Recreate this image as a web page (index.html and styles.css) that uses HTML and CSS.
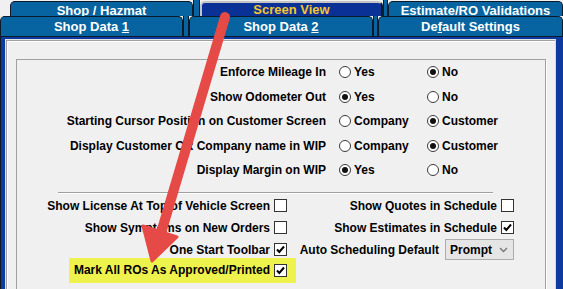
FILE: index.html
```html
<!DOCTYPE html>
<html lang="en">
<head>
  <meta charset="UTF-8">
  <title>Screen View Settings</title>
  <link rel="stylesheet" href="styles.css">
</head>
<body>
  <div class="window">
    <div class="tabrow back">
      <div class="tab-spacer"></div>
      <div class="tab w-hazmat">Shop / <u>H</u>azmat</div>
      <div class="tab-gap g7"></div>
      <div class="tab active w-screen">Screen View</div>
      <div class="tab-gap g5"></div>
      <div class="tab w-valid">Estimate/RO <u>V</u>alidations</div>
    </div>
    <div class="tabrow front">
      <div class="tab w-data1">Shop Data <u>1</u></div>
      <div class="tab-gap g6"></div>
      <div class="tab w-data2">Shop Data <u>2</u></div>
      <div class="tab-gap g5"></div>
      <div class="tab w-default">De<u>f</u>ault Settings</div>
    </div>

    <div class="frame">
      <div class="panel">
        <div class="group">
          <div class="options">
            <div class="label">Enforce Mileage In</div>
            <div class="opt"><span class="radio"></span>Yes</div>
            <div class="opt"><span class="radio on"></span>No</div>

            <div class="label">Show Odometer Out</div>
            <div class="opt"><span class="radio on"></span>Yes</div>
            <div class="opt"><span class="radio"></span>No</div>

            <div class="label">Starting Cursor Position on Customer Screen</div>
            <div class="opt"><span class="radio"></span>Company</div>
            <div class="opt"><span class="radio on"></span>Customer</div>

            <div class="label">Display Customer OR Company name in WIP</div>
            <div class="opt"><span class="radio"></span>Company</div>
            <div class="opt"><span class="radio on"></span>Customer</div>

            <div class="label">Display Margin on WIP</div>
            <div class="opt"><span class="radio on"></span>Yes</div>
            <div class="opt"><span class="radio"></span>No</div>
          </div>

          <div class="sep"></div>

          <div class="checks">
            <div class="check">Show License At Top of Vehicle Screen <span class="box"></span></div>
            <div class="check">Show Quotes in Schedule <span class="box"></span></div>

            <div class="check">Show Symptoms on New Orders <span class="box"></span></div>
            <div class="check">Show Estimates in Schedule <span class="box on"></span></div>

            <div class="check">One Start Toolbar <span class="box on"></span></div>
            <div class="check">Auto Scheduling Default
              <div class="select">Prompt
                <svg width="9" height="6" viewBox="0 0 9 6"><path d="M1 1 L4.5 4.5 L8 1" fill="none" stroke="#777" stroke-width="1.4"/></svg>
              </div>
            </div>

            <div class="check highlight">Mark All ROs As Approved/Printed <span class="box on"></span></div>
            <div></div>
          </div>
        </div>
      </div>
    </div>

    <!-- annotation arrow drawn over the form -->
    <svg class="arrow" width="563" height="289" viewBox="0 0 563 289">
      <line x1="225" y1="17" x2="161" y2="233" stroke="#e64a47" stroke-width="10" stroke-linecap="round"/>
      <polygon points="152,261 143,226 177,237" fill="#e64a47" stroke="#e64a47" stroke-width="3" stroke-linejoin="round"/>
    </svg>
  </div>
</body>
</html>
```

FILE: styles.css
```css
:root {
  --tab-blue: #0764a0;
  --tab-edge: #0c1a2a;
  --tab-active: #0a3196;
  --frame-blue: #0d3a9f;
  --face: #f0f0f0;
  --shadow: #a0a0a0;
}

body {
  margin: 0;
  background-color: var(--face);
  font-family: "Liberation Sans", Arial, sans-serif;
  font-size: 12px;
  font-weight: bold;
  color: #000;
  overflow: hidden;
}

.window {
  position: relative;
  width: 563px;
  height: 289px;
  overflow: hidden;
}

/* tabs */
.tabrow {
  display: flex;
}

.tabrow.back {
  height: 16px;
}

.tabrow.front {
  height: 20px;
}

.tab-spacer {
  width: 10px;
}

.tab {
  box-sizing: border-box;
  background-color: var(--tab-blue);
  border: 1px solid var(--tab-edge);
  border-bottom: none;
  border-radius: 5px 5px 0 0;
  color: #fff;
  font-size: 13px;
  text-align: center;
}

.back .tab {
  line-height: 17px;
  margin-top: 1px;
}

.front .tab {
  line-height: 19px;
}

.tab.active {
  background-color: var(--tab-active);
  border: 2px solid #c4c4c4;
  border-right-color: var(--tab-edge);
  border-bottom: none;
  color: #f4c631;
  line-height: 14px;
}

.tab-gap {
  box-sizing: border-box;
  background-color: var(--tab-blue);
  border-left: 1px solid var(--tab-edge);
  border-right: 1px solid var(--tab-edge);
}

.g5 { width: 5px; }
.g6 { width: 6px; }
.g7 { width: 7px; }

.w-hazmat { width: 183px; }
.w-screen { width: 183px; }
.w-valid { width: 175px; }
.w-data1 { width: 183px; }
.w-data2 { width: 184px; }
.w-default { width: 185px; }

/* frame and panel */
.frame {
  background-color: var(--frame-blue);
  border-top: 1px solid var(--tab-edge);
  border-left: 1px solid var(--tab-edge);
  padding: 2px 7px 0 4px;
  height: 260px;
}

.panel {
  height: 100%;
  background-color: var(--face);
  border: 1px solid #e4e4e4;
  border-right-color: #d8d8d8;
  box-shadow: inset 1px 1px 0 var(--shadow), inset 2px 2px 0 #fff;
  padding: 19px 9px 0 10px;
}

.group {
  height: 240px;
  border: 1px solid var(--shadow);
  border-bottom: none;
  box-shadow: 1px 1px 0 #fff;
}

/* radio rows */
.options {
  display: grid;
  grid-template-columns: 313px 88px auto;
  grid-auto-rows: 24.5px;
  align-items: center;
}

.label {
  text-align: right;
  padding-right: 4px;
}

.opt {
  display: flex;
  align-items: center;
}

.radio {
  box-sizing: border-box;
  position: relative;
  width: 12px;
  height: 12px;
  margin: 0 3px 0 9px;
  border: 1px solid #3a3a3a;
  border-radius: 50%;
  background-color: #fff;
}

.radio.on::after {
  content: "";
  position: absolute;
  left: 2px;
  top: 2px;
  width: 6px;
  height: 6px;
  border-radius: 50%;
  background-color: #111;
}

.sep {
  width: 435px;
  margin: 9px 0 1px 41px;
  border-top: 1px solid var(--shadow);
  border-bottom: 1px solid #fff;
}

/* checkbox rows */
.checks {
  display: grid;
  grid-template-columns: 270px 227px;
  grid-auto-rows: 22px;
  align-items: center;
}

.check {
  justify-self: end;
  display: flex;
  align-items: center;
  gap: 4px;
  white-space: nowrap;
}

.box {
  box-sizing: border-box;
  width: 13px;
  height: 13px;
  border: 1px solid #333;
  background-color: #fff;
}

.box.on {
  background: #fff url("data:image/svg+xml,%3Csvg xmlns='http://www.w3.org/2000/svg' width='11' height='11'%3E%3Cpath d='M2 5.5 L4.3 8 L9 2.5' fill='none' stroke='%23000' stroke-width='2'/%3E%3C/svg%3E") no-repeat center;
}

.select {
  box-sizing: border-box;
  display: flex;
  align-items: center;
  justify-content: space-between;
  width: 69px;
  height: 21px;
  margin-left: 2px;
  padding: 0 5px 0 4px;
  border: 1px solid #adadad;
  background-color: #e5e5e5;
  font-size: 12px;
}

.highlight {
  align-self: start;
  height: 25px;
  margin-top: -3px;
  margin-right: -9px;
  padding: 0 9px 0 5px;
  background-color: #eef24c;
}

.arrow {
  position: absolute;
  left: 0;
  top: 0;
  pointer-events: none;
}
```
